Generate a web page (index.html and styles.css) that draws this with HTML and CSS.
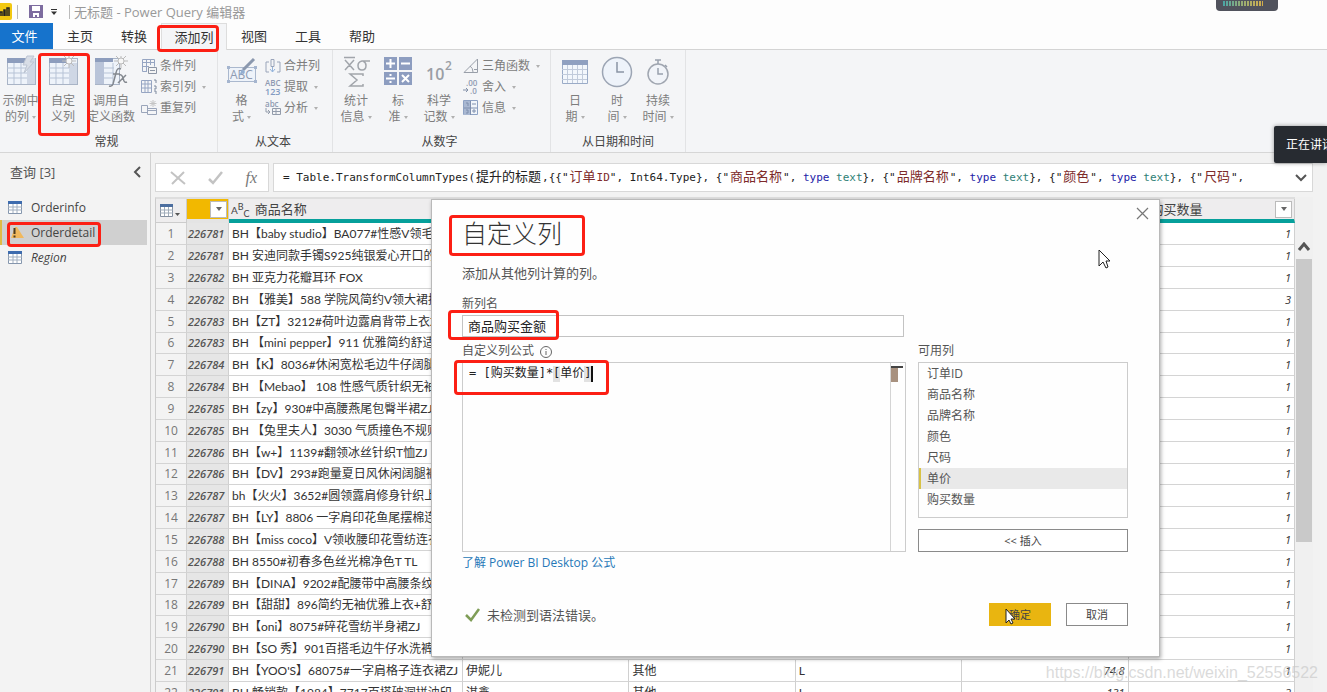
FILE: index.html
```html
<!DOCTYPE html>
<html lang="zh-CN">
<head>
<meta charset="utf-8">
<title>无标题 - Power Query 编辑器</title>
<link rel="stylesheet" href="styles.css">
</head>
<body>
<div class="app">
  <header class="titlebar">
    <svg class="logo" width="12" height="17" viewBox="0 0 12 17"><path fill="#f2c811" d="M0 0h10q2 0 2 2v13q0 2-2 2H0z"/><path fill="none" stroke="#222" d="M0 13V9h2v4M4 13V7h1v6M7 13V5h2v8" stroke-width="1.5"/></svg>
    <span class="bar"></span>
    <button class="plain save" aria-label="保存"><svg width="14" height="13" viewBox="0 0 14 13"><path fill="#7d6c9f" d="M0 0h14v13H0z"/><path fill="#fff" d="M3 1h8v5H3zM4 8h6v4H8V10H6v2H4z"/></svg></button>
    <button class="plain quick" aria-label="自定义快速访问工具栏"><svg width="6" height="6" viewBox="0 0 6 6"><path d="M0 0h6v1H0zM0 2.500h6L3 6z" fill="#333"/></svg></button>
    <span class="bar"></span>
    <span class="doc-title">无标题 - Power Query 编辑器</span>
  </header>

  <nav class="tabs">
    <button class="tab file">文件</button>
    <button class="tab">主页</button>
    <button class="tab">转换</button>
    <button class="tab active">添加列</button>
    <button class="tab">视图</button>
    <button class="tab">工具</button>
    <button class="tab">帮助</button>
  </nav>

  <section class="ribbon">
    <div class="group g-general">
      <div class="tools">
        <button class="big w-first"><svg width="32" height="32" viewBox="0 0 32 32"><rect x="2.500" y="2.500" width="28" height="26" fill="#eef3fa" stroke="#a9b4c6"/><path fill="#8d9dbd" d="M2 2h20v5H2z"/><path fill="#cfd7e5" d="M22 2h8v26h-8z"/><path d="M2 12h20M2 17h20M2 22h20M9 7v21M16 7v21" stroke="#b7c3d6"/><path fill="#d8dde6" stroke="#bcc4d2" d="M22 0h7l-4 6h4l-10 11 3-8h-4z"/></svg><span>示例中<br>的列<i class="caret"></i></span></button>
        <button class="big w-custom"><svg width="32" height="32" viewBox="0 0 32 32"><rect x="2.500" y="2.500" width="28" height="26" fill="#eef3fa" stroke="#a9b4c6"/><path fill="#8d9dbd" d="M2 2h18v5H2z"/><path fill="#cfd7e5" d="M22 7h8v21h-8z"/><path d="M2 12h20M2 17h20M2 22h20M9 7v21M16 7v21" stroke="#b7c3d6"/><circle cx="22" cy="5" r="3" fill="#f7f7f7" stroke="#bbb"/><path d="M22 0v2M22 8v4M15 5h4M25 5h4M17 0l3 3M24 7l3 3M27 0l-3 3M17 10l3-3" stroke="#bbb"/></svg><span>自定<br>义列</span></button>
        <button class="big w-invoke"><svg width="36" height="32" viewBox="0 0 36 32"><rect x="2.500" y="2.500" width="24" height="26" fill="#eef3fa" stroke="#a9b4c6"/><path fill="#8d9dbd" d="M2 2h18v4H2z"/><path fill="#b9c4d9" d="M2 6h9v22H2z"/><path d="M11 12h10M11 17h10M11 22h9M20 7v21" stroke="#b7c3d6"/><circle cx="28" cy="5" r="3" fill="#f7f7f7" stroke="#bbb"/><path d="M28 0v2M28 8v4M21 5h4M31 5h4M23 0l3 3M30 7l3 3M33 0l-3 3M23 10l3-3" stroke="#bbb"/><path d="M28 13q-4-2-5 4l-3 11q-1 3-4 2M20 18h7M26 19q3-1 4 3l1 3q1 2 3 1M33 19l-8 8" fill="none" stroke="#83888f" stroke-width="1.500"/></svg><span>调用自<br>定义函数</span></button>
        <div class="small-col">
          <button class="small"><svg width="16" height="16" viewBox="0 0 16 16"><path d="M1.500 1.500h12v7M6 13.500H1.500v-12M1 4.500h12M1 8.500h7M5.500 1v12M9.500 1v6" fill="none" stroke="#96a5c2"/><path d="M7.500 9.500h8v6h-8z" fill="#f5f5f5" stroke="#8c95a5"/><path d="M9 12.500h5" stroke="#8c95a5"/></svg>条件列</button>
          <button class="small"><svg width="16" height="16" viewBox="0 0 16 16"><path d="M.5 1.500h10v12H.5zM.5 5h10M.5 9h10M4 1v12M7 1v12" fill="none" stroke="#96a5c2"/><path d="M13 1h2v3M13 7h2v3h-2M13 12h2v3" fill="none" stroke="#7d899e"/></svg>索引列<i class="caret"></i></button>
          <button class="small"><svg width="16" height="16" viewBox="0 0 16 16"><path d="M.5 5.500h6v7h-6zM6.500 8.500h9v6h-9zM6 10.500h9" fill="none" stroke="#9aa5ba"/><path d="M12 0v7M8.500 3.500h7M9.500 1l5 5M14.500 1l-5 5" stroke="#c4c4c4"/></svg>重复列</button>
        </div>
      </div>
      <h2>常规</h2>
    </div>
    <div class="group g-text">
      <div class="tools">
        <button class="big w-format"><svg width="32" height="32" viewBox="0 0 32 32"><path d="M2.500 11.500h27v14h-27z" fill="#eef3fa" stroke="#aab8ce"/><text x="4" y="23" class="glyph" font-size="12">ABC</text><path d="M28 3l-11 11" stroke="#8b98ae" stroke-width="3"/><path d="M16 13l3 3-6 4z" fill="#93aed1"/><path d="M1 10h3v3H1zM28 10h3v3h-3zM1 24h3v3H1zM28 24h3v3h-3z" fill="#a5b5cf"/></svg><span>格<br>式<i class="caret"></i></span></button>
        <div class="small-col">
          <button class="small"><svg width="16" height="16" viewBox="0 0 16 16"><path d="M4 4H1v10h3M12 4h3v10h-3M6 1.500h3v7H6z" fill="none" stroke="#9aa5ba"/><path d="M7.500 9v5M5 11l2.500 3 2.500-3" fill="none" stroke="#94b4dc"/></svg>合并列</button>
          <button class="small"><svg width="16" height="18" viewBox="0 0 16 18"><text x="0" y="8" class="glyph tiny" font-size="8">ABC</text><text x="0" y="17" class="glyph tiny blue" font-size="9">123</text></svg>提取<i class="caret"></i></button>
          <button class="small"><svg width="16" height="16" viewBox="0 0 16 16"><text x="0" y="7" class="glyph tiny" font-size="8">abc</text><path d="M1 8v4h4M3 10l2 2-2 2M7.500 8.500h8v6h-8zM7 11.500h8M11 9v6" fill="none" stroke="#939cab"/></svg>分析<i class="caret"></i></button>
        </div>
      </div>
      <h2>从文本</h2>
    </div>
    <div class="group g-number">
      <div class="tools">
        <button class="big w-stat"><svg width="32" height="32" viewBox="0 0 32 32"><path d="M4 1.500h11M5 4l9 10M14 4L5 14M30 5h-8q-4 1-4 4.500 0 4.500 4 4.500t4-4.500q0-3-3-4.500M23 20v-2H10l7 6-7 6h13v-2" fill="none" stroke="#a1a5ab" stroke-width="1.500"/></svg><span>统计<br>信息<i class="caret"></i></span></button>
        <button class="big w-standard"><svg width="32" height="32" viewBox="0 0 32 32"><path fill="#8d9dc0" d="M2 1h13v13H2zM17 1h13v13H17zM2 16h13v13H2zM17 16h13v13H17z"/><path d="M8.500 3v9M4 7.500h9M19 7.500h9M4 22.500h9M20 19l7 7M27 19l-7 7M8.500 18v2M8.500 25v2" stroke="#fff" stroke-width="2"/></svg><span>标<br>准<i class="caret"></i></span></button>
        <button class="big w-sci"><svg width="32" height="32" viewBox="0 0 32 32"><text x="3" y="24" class="glyph strong" font-size="16">10</text><text x="22" y="14" class="glyph strong" font-size="12">2</text></svg><span>科学<br>记数<i class="caret"></i></span></button>
        <div class="small-col">
          <button class="small"><svg width="16" height="16" viewBox="0 0 16 16"><path d="M1 14.500h13.500V1zM7 8q3 2 3 6M11 11.500h3" fill="none" stroke="#999fa9"/></svg>三角函数<i class="caret"></i></button>
          <button class="small"><svg width="16" height="18" viewBox="0 0 16 18"><text x="3" y="8" class="glyph tiny" font-size="8">.00</text><text x="7" y="16" class="glyph tiny" font-size="8">.0</text><path d="M0 12h5M3 10l2 2-2 2" fill="none" stroke="#8290a8"/></svg>舍入<i class="caret"></i></button>
          <button class="small"><svg width="16" height="16" viewBox="0 0 16 16"><path fill="#f1f5fa" stroke="#8ea2c4" d="M.5.500h14v14H.5z"/><path fill="#a9b8d2" d="M1 1h6v14H1z"/><path d="M7.500 1v14M1 8h13M3 3h2v3M3 10h2v3H3M9 4h4M9 11h4M11 9v4" fill="none" stroke="#7f8fae"/></svg>信息<i class="caret"></i></button>
        </div>
      </div>
      <h2>从数字</h2>
    </div>
    <div class="group g-date">
      <div class="tools">
        <button class="big w-date"><svg width="32" height="32" viewBox="0 0 32 32"><path d="M3.500 4.500h25v23h-25z" fill="#f3f7fc" stroke="#9aabc7"/><path fill="#8fa0c0" d="M3 4h26v5H3z"/><path d="M3 13.500h25M3 18.500h25M3 23.500h25M8.500 9v18M13.500 9v18M18.500 9v18M23.500 9v18" stroke="#c1cbdb"/></svg><span>日<br>期<i class="caret"></i></span></button>
        <button class="big w-time"><svg width="32" height="32" viewBox="0 0 32 32"><circle cx="16" cy="16" r="14.500" fill="#eef3fa" stroke="#9ca5b4" stroke-width="1.500"/><path d="M16 6v10h7" fill="none" stroke="#8b95a5" stroke-width="1.500"/></svg><span>时<br>间<i class="caret"></i></span></button>
        <button class="big w-duration"><svg width="32" height="32" viewBox="0 0 32 32"><circle cx="16" cy="18" r="10" fill="#f1f4f9" stroke="#a0a6b0" stroke-width="1.500"/><path d="M16 12v6h5M13 4h6M16 4v4M23 9l2 2" fill="none" stroke="#98a0ad" stroke-width="1.500"/></svg><span>持续<br>时间<i class="caret"></i></span></button>
      </div>
      <h2>从日期和时间</h2>
    </div>
  </section>

  <div class="body">
    <aside class="queries">
      <div class="queries-head"><span>查询 [3]</span><button class="plain" aria-label="折叠"><svg width="8" height="12" viewBox="0 0 8 12"><path d="M7 1L2 6l5 5" fill="none" stroke="#555" stroke-width="2"/></svg></button></div>
      <button class="query"><svg width="14" height="13" viewBox="0 0 14 13"><path d="M.5.500h13v12H.5z" fill="#fff" stroke="#8596ad"/><path fill="#3e6cae" d="M0 0h14v3H0z"/><path d="M0 6h14M0 9h14M5 3v9M9 3v9" stroke="#a2afbf"/></svg>Orderinfo</button>
      <button class="query selected"><svg width="14" height="13" viewBox="0 0 14 13"><path d="M5 1h2l7 11H1z" fill="#f1b85c"/><path d="M4.500 2v6M4.500 9.500v2" stroke="#4b3b20" stroke-width="2"/></svg>Orderdetail</button>
      <button class="query italic"><svg width="14" height="13" viewBox="0 0 14 13"><path d="M.5.500h13v12H.5z" fill="#fff" stroke="#8596ad"/><path fill="#3e6cae" d="M0 0h14v3H0z"/><path d="M0 6h14M0 9h14M5 3v9M9 3v9" stroke="#a2afbf"/></svg>Region</button>
    </aside>

    <main class="main">
      <div class="formula-row">
        <div class="formula-actions">
          <button class="plain" aria-label="取消"><svg width="16" height="14" viewBox="0 0 16 14"><path d="M1 1l14 12M14 1L2 13" stroke="#c3c3c3" stroke-width="2"/></svg></button>
          <button class="plain" aria-label="提交"><svg width="16" height="14" viewBox="0 0 16 14"><path d="M1 8l4 4L14 1" fill="none" stroke="#c3c3c3" stroke-width="2.500"/></svg></button>
          <button class="plain fx">fx</button>
        </div>
        <div class="formula">
          <code>= Table.TransformColumnTypes(<span class="cjk">提升的标题</span>,{{"<span class="cjk str">订单</span><span class="str">ID</span>", Int64.Type}, {"<span class="cjk str">商品名称</span>", <span class="kw">type</span> <span class="ty">text</span>}, {"<span class="cjk str">品牌名称</span>", <span class="kw">type</span> <span class="ty">text</span>}, {"<span class="cjk str">颜色</span>", <span class="kw">type</span> <span class="ty">text</span>}, {"<span class="cjk str">尺码</span>",</code>
          <button class="plain" aria-label="展开"><svg width="12" height="8" viewBox="0 0 12 8"><path d="M1 1l5 5 5-5" fill="none" stroke="#555" stroke-width="2"/></svg></button>
        </div>
      </div>

      <div class="grid-area">
        <table class="grid">
          <colgroup><col class="c-num"><col class="c-id"><col class="c-name"><col><col><col><col><col></colgroup>
          <thead>
            <tr>
              <th class="corner"><svg width="21" height="14" viewBox="0 0 21 14"><path d="M.5.500h12v12H.5z" fill="#fff" stroke="#8490a0"/><path fill="#4c6e9f" d="M0 0h13v3H0z"/><path d="M0 6h13M0 9h13M4.500 3v9M8.500 3v9" stroke="#9fabb9"/><path d="M15 9h5l-2.500 3z" fill="#555"/></svg></th>
              <th class="id-head"><button class="filter" aria-label="筛选"></button></th>
              <th><span class="abc">A<sup>B</sup><sub>C</sub></span>商品名称</th>
              <th></th><th></th><th></th><th></th>
              <th class="qty-head"><div><span>购买数量</span><button class="filter" aria-label="筛选"></button></div></th>
            </tr>
          </thead>
          <tbody>
            <tr><td>1</td><td>226781</td><td>BH【baby studio】BA077#性感V领毛毛外套</td><td colspan="4"></td><td>1</td></tr>
            <tr><td>2</td><td>226781</td><td>BH 安迪同款手镯S925纯银爱心开口的</td><td colspan="4"></td><td>1</td></tr>
            <tr><td>3</td><td>226782</td><td>BH 亚克力花瓣耳环 FOX</td><td colspan="4"></td><td>1</td></tr>
            <tr><td>4</td><td>226782</td><td>BH 【雅美】588 学院风简约V领大裙摆</td><td colspan="4"></td><td>3</td></tr>
            <tr><td>5</td><td>226783</td><td>BH【ZT】3212#荷叶边露肩背带上衣ZJ</td><td colspan="4"></td><td>1</td></tr>
            <tr><td>6</td><td>226783</td><td>BH 【mini pepper】911 优雅简约舒适</td><td colspan="4"></td><td>1</td></tr>
            <tr><td>7</td><td>226784</td><td>BH【K】8036#休闲宽松毛边牛仔阔腿裤</td><td colspan="4"></td><td>1</td></tr>
            <tr><td>8</td><td>226784</td><td>BH 【Mebao】 108 性感气质针织无袖</td><td colspan="4"></td><td>1</td></tr>
            <tr><td>9</td><td>226785</td><td>BH【zy】930#中高腰燕尾包臀半裙ZJ</td><td colspan="4"></td><td>1</td></tr>
            <tr><td>10</td><td>226785</td><td>BH 【兔里夫人】3030 气质撞色不规则</td><td colspan="4"></td><td>1</td></tr>
            <tr><td>11</td><td>226786</td><td>BH【w+】1139#翻领冰丝针织T恤ZJ</td><td colspan="4"></td><td>1</td></tr>
            <tr><td>12</td><td>226786</td><td>BH【DV】293#跑量夏日风休闲阔腿裤</td><td colspan="4"></td><td>1</td></tr>
            <tr><td>13</td><td>226787</td><td>bh【火火】3652#圆领露肩修身针织上衣</td><td colspan="4"></td><td>1</td></tr>
            <tr><td>14</td><td>226787</td><td>BH【LY】8806 一字肩印花鱼尾摆棉连衣裙</td><td colspan="4"></td><td>1</td></tr>
            <tr><td>15</td><td>226788</td><td>BH【miss coco】V领收腰印花雪纺连衣裙</td><td colspan="4"></td><td>1</td></tr>
            <tr><td>16</td><td>226788</td><td>BH 8550#初春多色丝光棉净色T TL</td><td colspan="4"></td><td>1</td></tr>
            <tr><td>17</td><td>226789</td><td>BH【DINA】9202#配腰带中高腰条纹</td><td colspan="4"></td><td>1</td></tr>
            <tr><td>18</td><td>226789</td><td>BH【甜甜】896简约无袖优雅上衣+舒适</td><td colspan="4"></td><td>1</td></tr>
            <tr><td>19</td><td>226790</td><td>BH【oni】8075#碎花雪纺半身裙ZJ</td><td colspan="4"></td><td>1</td></tr>
            <tr><td>20</td><td>226790</td><td>BH【SO 秀】901百搭毛边牛仔水洗裤</td><td colspan="4"></td><td>1</td></tr>
            <tr><td>21</td><td>226791</td><td>BH【YOO'S】68075#一字肩格子连衣裙ZJ</td><td>伊妮儿</td><td>其他</td><td>L</td><td class="num">74.8</td><td>1</td></tr>
            <tr><td>22</td><td>226791</td><td>BH 畅销款【1984】7717百搭破洞拼油印</td><td>淇鑫</td><td>其他</td><td>L</td><td class="num">131</td><td>2</td></tr>
          </tbody>
        </table>
        <div class="scroll">
          <svg width="14" height="10" viewBox="0 0 14 10"><path d="M2 8l5-6 5 6" fill="none" stroke="#555" stroke-width="3"/></svg>
          <div class="thumb"></div>
        </div>
      </div>
    </main>
  </div>

  <section class="dialog" role="dialog" aria-labelledby="dlg-title">
    <button class="plain close" aria-label="关闭"><svg width="13" height="13" viewBox="0 0 13 13"><path d="M1 1l11 11M12 1L1 12" stroke="#777" stroke-width="1.200"/></svg></button>
    <h1 id="dlg-title">自定义列</h1>
    <p class="desc">添加从其他列计算的列。</p>
    <label class="label" for="colname">新列名</label>
    <input class="name" id="colname" type="text" value="商品购买金额">
    <div class="columns">
      <div class="left">
        <label class="label" for="expr">自定义列公式 <svg width="12" height="12" viewBox="0 0 12 12"><circle cx="6" cy="6" r="5.500" fill="none" stroke="#666"/><path d="M6 5v4M6 3v1" stroke="#666"/></svg></label>
        <div class="editor">
          <i class="match open"></i><i class="match shut"></i>
          <textarea id="expr" spellcheck="false">= [购买数量]*[单价]</textarea>
          <i class="cursor"></i>
          <div class="ruler"></div>
        </div>
        <a class="learn" href="#">了解 Power BI Desktop 公式</a>
      </div>
      <div class="right">
        <div class="label" id="avail">可用列</div>
        <ul class="list" role="listbox" aria-labelledby="avail">
          <li>订单ID</li><li>商品名称</li><li>品牌名称</li><li>颜色</li><li>尺码</li><li class="on">单价</li><li>购买数量</li>
        </ul>
        <button class="btn insert">&lt;&lt; 插入</button>
      </div>
    </div>
    <footer class="foot">
      <span class="ok"><svg width="16" height="14" viewBox="0 0 16 14"><path d="M1 7l5 5L14 1" fill="none" stroke="#7f9d57" stroke-width="2.500"/></svg>未检测到语法错误。</span>
      <span class="buttons"><button class="btn primary">确定</button><button class="btn">取消</button></span>
    </footer>
  </section>

  <div class="mark m-tab"></div>
  <div class="mark m-button"></div>
  <div class="mark m-query"></div>
  <div class="mark m-title"></div>
  <div class="mark m-name"></div>
  <div class="mark m-expr"></div>

  <svg class="pointer p-one" width="13" height="21" viewBox="0 0 13 21"><path d="M1 1v16l4-4 3 6 2-1-2-6h4z" fill="#fff" stroke="#222"/></svg>
  <svg class="pointer p-two" width="13" height="21" viewBox="0 0 13 21"><path d="M1 1v14l3-3 2 4 2-1-2-4h4z" fill="#fff" stroke="#222"/></svg>

  <div class="meter"><i></i></div>
  <div class="toast">正在讲话:</div>
  <div class="watermark">https://blog.csdn.net/weixin_52556522</div>
</div>
</body>
</html>
```
FILE: styles.css
```css
* { box-sizing: border-box; }
body {
  margin: 0;
  font: 12px/16px "Open Sans", "Noto Sans CJK SC", sans-serif;
  color: #444;
  background: #f2f2f2;
}
button { font: inherit; color: inherit; }
h1, h2, p, ul { margin: 0; padding: 0; font-weight: normal; }
.app {
  position: relative;
  height: 100vh;
  overflow: hidden;
  display: flex;
  flex-direction: column;
}
.plain { border: 0; padding: 0; background: none; display: flex; align-items: center; justify-content: center; }

/* Title bar and tabs */
.titlebar { display: flex; align-items: center; height: 23px; flex: none; background: #fdfdfd; }
.logo { margin-right: 5px; }
.bar { width: 1px; height: 14px; background: #bbb; }
.save { margin-left: 11px; }
.quick { margin: 0 12px 0 8px; }
.doc-title { margin-left: 4px; font-size: 13px; color: #999; }
.tabs { display: flex; height: 27px; flex: none; background: #fdfdfd; border-bottom: 1px solid #d4d4d4; }
.tab { width: 54px; border: 0; padding: 0; background: none; font-size: 13px; color: #333; }
.tab.file { background: #1673cc; color: #fff; width: 53px; padding-right: 4px; }
.tab.active { width: 66px; height: 27px; background: #f4f5f7; border: 1px solid #ddd; border-bottom: 0; }

/* Ribbon */
.ribbon { display: flex; height: 103px; flex: none; background: #f4f5f7; border-bottom: 1px solid #d6d6d6; color: #7d7d7d; }
.group { display: flex; flex-direction: column; padding: 6px 0 2px; border-right: 1px solid #e2e3e5; }
.group h2 { font-size: 12px; line-height: 16px; color: #444; text-align: center; }
.g-general { width: 218px; padding-right: 4px; }
.g-text { width: 115px; padding-right: 4px; }
.g-number { width: 218px; padding-right: 4px; }
.g-date { width: 135px; }
.tools { display: flex; flex: 1; }
.big { display: flex; flex-direction: column; align-items: center; gap: 5px; border: 0; padding: 0; background: none; white-space: nowrap; flex: none; }
.big svg { display: block; }
.w-first { width: 41px; }
.w-custom { width: 44px; }
.w-invoke { width: 52px; margin-right: 4px; }
.w-format { width: 47px; }
.w-stat { width: 46px; }
.w-standard { width: 38px; }
.w-sci { width: 44px; margin-right: 2px; }
.w-date { width: 48px; }
.w-time { width: 36px; }
.w-duration { width: 46px; }
.small-col { display: flex; flex-direction: column; gap: 1px; }
.small { display: flex; align-items: center; gap: 3px; height: 20px; border: 0; padding: 0; background: none; white-space: nowrap; }
.small svg, .big svg { overflow: visible; }
.caret { display: inline-block; border: 2px solid transparent; border-top: 3px solid #b0b0b0; border-bottom: 0; margin-left: 3px; vertical-align: middle; }
.glyph { fill: #8f9bb2; font-family: "Open Sans", sans-serif; }
.glyph.tiny { font-weight: 600; }
.glyph.blue { fill: #829bc2; }
.glyph.strong { fill: #9a9ea5; font-weight: 600; }

/* Query list */
.body { display: flex; flex: 1; min-height: 0; }
.queries { width: 151px; flex: none; background: #f3f3f3; border-right: 1px solid #d0d0d0; padding-right: 3px; }
.queries-head { display: flex; justify-content: space-between; align-items: center; padding: 0 6px 0 10px; height: 38px; margin-bottom: 4px; font-size: 13px; color: #555; }
.query { display: flex; align-items: center; gap: 9px; width: 100%; height: 25px; border: 0; padding: 0 0 0 8px; background: none; color: #444; }
.query.selected { background: #d0d0d0; border-left: 2px solid #e0bb45; padding-left: 8px; gap: 7px; }
.italic { font-style: italic; }

/* Formula bar */
.main { flex: 1; min-width: 0; padding: 10px 14px 0 4px; display: flex; flex-direction: column; }
.formula-row { display: flex; gap: 4px; height: 29px; flex: none; }
.formula-actions { display: flex; align-items: center; justify-content: space-between; width: 114px; padding: 0 11px 0 14px; background: #fff; border: 1px solid #d8d8d8; }
.fx { font: italic 16px/20px "Liberation Serif", serif; color: #777; }
.formula { flex: 1; min-width: 0; display: flex; align-items: center; justify-content: space-between; padding: 0 5px 0 9px; background: #fff; border: 1px solid #d8d8d8; overflow: hidden; }
.formula code { font: 11px/20px "DejaVu Sans Mono", "Noto Sans CJK SC", monospace; color: #222; white-space: pre; }
.cjk { font-size: 13px; margin: 0 1px; }
.str { color: #7d2a2a; }
.kw { color: #2323a8; }
.ty { color: #2f7f76; }

/* Data grid */
.grid-area { flex: 1; min-height: 0; display: flex; margin-top: 5px; overflow: hidden; }
.grid { flex: 1; min-width: 0; width: 100%; height: 0; border-collapse: separate; border-spacing: 0; table-layout: fixed; font: 12px/14px Lato, "Noto Sans CJK SC", sans-serif; color: #333; border-left: 1px solid #ccc; border-top: 2px solid #dedede; }
.c-num { width: 31px; }
.c-id { width: 42px; }
.c-name { width: 234px; }
.grid th { height: 24px; padding: 0 2px; text-align: left; font-size: 13px; font-weight: 400; background: #eeedee; border-bottom: 4px solid #06a09b; border-right: 1px solid #ccc; white-space: nowrap; color: #444; }
.grid th.corner { border-bottom: 1px solid #ccc; padding-left: 4px; }
.grid th.corner svg { display: block; }
.grid th.id-head { background: #f2b800; border-bottom-color: #e4e4e4; text-align: right; padding: 0 1px; }
.grid th.qty-head { padding: 0 2px 0 22px; }
.qty-head div { display: flex; justify-content: space-between; align-items: center; }
.filter { display: inline-flex; align-items: center; justify-content: center; width: 17px; height: 17px; padding: 0; border: 1px solid #bbb; background: #fff; vertical-align: middle; }
.filter::after { content: ""; border: 3px solid transparent; border-top: 4px solid #666; border-bottom: 0; }
.abc { margin-right: 5px; font-size: 10px; }
.abc sup, .abc sub { font-size: 9px; line-height: 0; }
.grid td { height: 22px; padding: 0 3px; background: #fff; border-bottom: 1px solid #d4d4d4; border-right: 1px solid #d0d0d0; overflow: hidden; white-space: nowrap; }
.grid tr:nth-child(6n) td { height: 21px; }
.grid td:first-child { background: #f3f3f3; text-align: center; color: #777; font-family: "Open Sans", sans-serif; }
.grid td:nth-child(2) { background: #e6e6e6; padding: 0 1px; font: italic 600 11px/14px "Open Sans", sans-serif; color: #555; }
.grid td:last-child, .grid td.num { text-align: right; font: italic 11px/14px "Open Sans", sans-serif; }
.scroll { width: 18px; flex: none; display: flex; flex-direction: column; align-items: center; padding-top: 45px; gap: 7px; background: #f0f0f0; }
.thumb { width: 16px; height: 283px; background: #c9c9c9; }

/* Custom column dialog */
.dialog { position: absolute; left: 431px; right: 167px; top: 199px; padding: 17px 31px 30px 30px; background: #fefefe; border: 1px solid #b9b9b9; box-shadow: 1px 2px 4px #00000055; color: #555; }
.close { position: absolute; right: 10px; top: 7px; }
.dialog h1 { font-size: 25px; line-height: 32px; font-weight: 300; color: #333; }
.desc { font-size: 13px; line-height: 20px; margin: 14px 0 12px; }
.label { display: block; font-size: 12px; line-height: 18px; }
.label svg { vertical-align: middle; margin-left: 3px; }
.name { display: block; width: 442px; height: 22px; margin: 2px 0 5px; padding: 0 5px 2px; border: 1px solid #c3c3c3; font: 13px/18px "Noto Sans CJK SC", sans-serif; color: #222; background: #fff; }
.columns { display: flex; gap: 12px; }
.left { flex: 1; min-width: 0; }
.right { width: 210px; flex: none; }
.editor { position: relative; display: flex; height: 190px; margin: 2px 0; border: 1px solid #ccc; }
.editor textarea { position: relative; flex: 1; min-width: 0; border: 0; outline: 0; resize: none; padding: 1px 6px; background: transparent; color: #222; font: 12px/18px "DejaVu Sans Mono", "Noto Sans CJK SC", monospace; }
.ruler { width: 15px; border-left: 1px solid #d4d4d4; }
.ruler::before { content: ""; display: block; width: 12px; height: 2px; margin-top: 3px; background: #444; }
.ruler::after { content: ""; display: block; width: 7px; height: 14px; background: #a8917f; }
.match { position: absolute; top: 3px; width: 7px; height: 16px; background: #e2e2e2; }
.match.open { left: 90px; }
.match.shut { left: 121px; }
.cursor { position: absolute; left: 128px; top: 3px; width: 2px; height: 16px; background: #111; }
.learn { color: #2678b8; text-decoration: none; line-height: 18px; }
.list { list-style: none; height: 156px; margin: 2px 0 11px; padding: 0; border: 1px solid #ccc; }
.list li { height: 21px; line-height: 21px; padding-left: 8px; }
.list .on { background: #e9e9e9; border-left: 2px solid #d8c245; padding-left: 6px; }
.btn { width: 62px; height: 23px; padding: 0; border: 1px solid #8a8a8a; background: #fff; font-size: 11px; color: #444; }
.insert { display: block; width: 100%; }
.primary { background: #e9b510; border-color: #e9b510; }
.foot { display: flex; justify-content: space-between; align-items: center; margin-top: 31px; }
.ok { display: flex; align-items: center; gap: 6px; padding-left: 3px; font-size: 13px; }
.buttons { display: flex; gap: 15px; }

/* Annotation boxes, pointers and floating widgets */
.mark { position: absolute; border: 3px solid #fc1f14; border-radius: 4px; }
.m-tab { left: 157px; top: 25px; width: 62px; height: 27px; }
.m-button { left: 38px; top: 53px; width: 52px; height: 83px; }
.m-query { left: 7px; top: 222px; width: 94px; height: 25px; }
.m-title { left: 449px; top: 215px; width: 136px; height: 41px; }
.m-name { left: 448px; top: 310px; width: 111px; height: 30px; }
.m-expr { left: 454px; top: 360px; width: 155px; height: 35px; }
.pointer { position: absolute; }
.p-one { left: 1098px; top: 249px; }
.p-two { left: 1005px; top: 608px; }
.meter { position: absolute; right: 49px; top: 0; width: 62px; height: 11px; padding: 1px 7px; background: #51535d; border-radius: 0 0 4px 4px; }
.meter i { display: block; width: 40px; height: 5px; background: repeating-linear-gradient(90deg, transparent 0 2px, #51535d 2px 3px), linear-gradient(90deg, #4aa5a5, #9aad72, #d3ae4b); }
.toast { position: absolute; left: 1274px; right: 0; top: 126px; height: 37px; padding-left: 12px; overflow: hidden; white-space: nowrap; background: #272b31; color: #fff; line-height: 37px; border-radius: 2px 0 0 2px; box-shadow: 0 0 4px #0006; }
.watermark { position: absolute; right: 9px; bottom: 9px; font: 16px/20px "Liberation Sans", sans-serif; color: #c8c8c8aa; }
```
